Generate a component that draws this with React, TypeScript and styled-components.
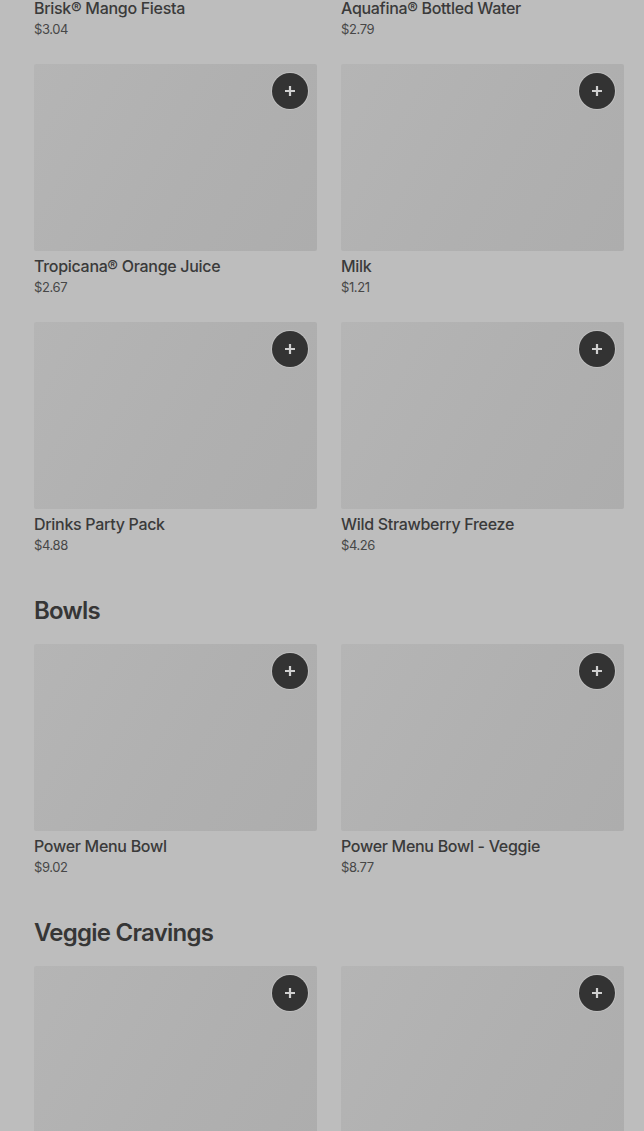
import styled, { createGlobalStyle } from 'styled-components';

const GlobalStyle = createGlobalStyle`
  html, body {
    margin: 0;
    padding: 0;
    background: #bdbdbd;
    font-family: Inter, "Noto Sans", "Liberation Sans", sans-serif;
    overflow: hidden;
  }
`;

type Item = { name: string; price: string };
type Section = { title?: string; items: Item[] };

const sections: Section[] = [
  {
    items: [
      { name: 'Brisk® Mango Fiesta', price: '$3.04' },
      { name: 'Aquafina® Bottled Water', price: '$2.79' },
      { name: 'Tropicana® Orange Juice', price: '$2.67' },
      { name: 'Milk', price: '$1.21' },
      { name: 'Drinks Party Pack', price: '$4.88' },
      { name: 'Wild Strawberry Freeze', price: '$4.26' },
    ],
  },
  {
    title: 'Bowls',
    items: [
      { name: 'Power Menu Bowl', price: '$9.02' },
      { name: 'Power Menu Bowl - Veggie', price: '$8.77' },
    ],
  },
  {
    title: 'Veggie Cravings',
    items: [
      { name: 'Bean Burrito', price: '$2.39' },
      { name: 'Black Bean Crunchwrap Supreme®', price: '$5.49' },
    ],
  },
];

const Page = styled.main`
  margin-top: -194px;
  padding: 0 20px 0 34px;
  display: flex;
  flex-direction: column;
`;

const Block = styled.section<{ $titled: boolean }>`
  margin-top: ${p => (p.$titled ? '40px' : '0')};
`;

const Heading = styled.h2`
  margin: 0 0 17px;
  font-size: 24px;
  line-height: 32px;
  font-weight: 600;
  letter-spacing: -0.75px;
  color: #363636;
`;

const Grid = styled.div`
  display: grid;
  grid-template-columns: 283px 283px;
  column-gap: 24px;
  row-gap: 25px;
`;

const Card = styled.article`
  display: flex;
  flex-direction: column;
`;

const Thumb = styled.div`
  position: relative;
  height: 187px;
  border-radius: 2px;
  background: linear-gradient(120deg, #b5b5b5 0%, #b0b0b0 55%, #adadad 100%);
`;

const AddButton = styled.button`
  position: absolute;
  top: 9px;
  right: 9px;
  width: 36px;
  height: 36px;
  border: none;
  border-radius: 50%;
  background: #333333;
  box-shadow: 0 0 0 1px rgba(220, 220, 220, 0.35);
  display: flex;
  align-items: center;
  justify-content: center;
  padding: 0;
`;

const Name = styled.div`
  margin-top: 4px;
  font-size: 16px;
  line-height: 22px;
  font-weight: 500;
  letter-spacing: -0.3px;
  color: #3a3a3a;
`;

const Price = styled.div`
  font-size: 13px;
  line-height: 20px;
  letter-spacing: -0.4px;
  color: #474747;
`;

function Plus() {
  return (
    <svg width='14' height='14' viewBox='0 0 14 14'>
      <path d='M7 2v10M2 7h10' stroke='#d0d0d0' strokeWidth='2.2' />
    </svg>
  );
}

function App() {
  return (
    <>
      <GlobalStyle />
      <Page>
        {sections.map((s, i) => (
          <Block key={i} $titled={!!s.title}>
            {s.title && <Heading>{s.title}</Heading>}
            <Grid>
              {s.items.map(item => (
                <Card key={item.name}>
                  <Thumb>
                    <AddButton aria-label={`Add ${item.name}`}>
                      <Plus />
                    </AddButton>
                  </Thumb>
                  <Name>{item.name}</Name>
                  <Price>{item.price}</Price>
                </Card>
              ))}
            </Grid>
          </Block>
        ))}
      </Page>
    </>
  );
}

export default App;
